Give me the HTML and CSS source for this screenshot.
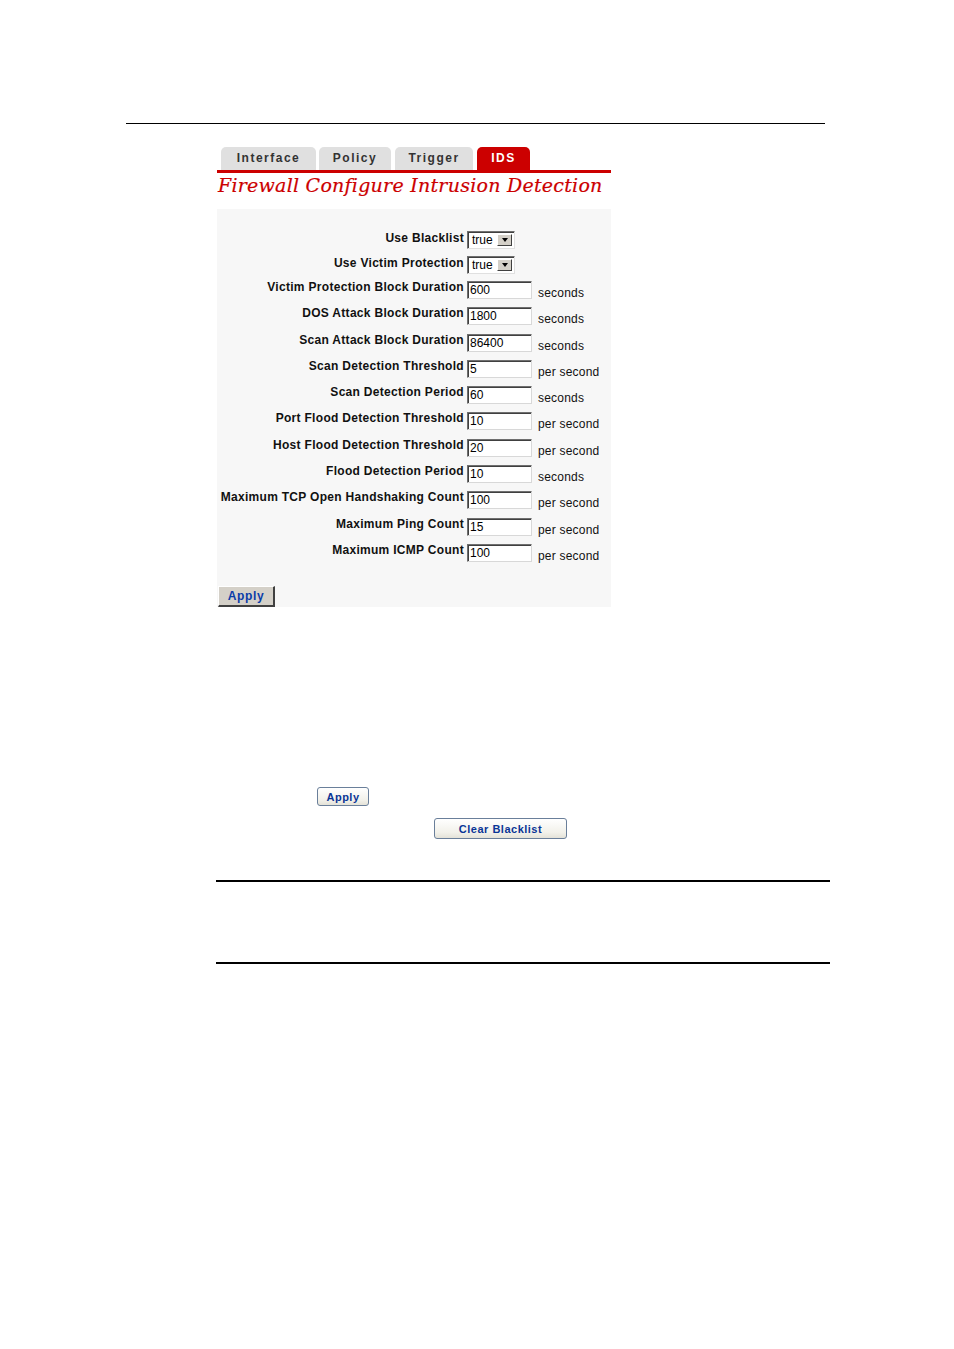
FILE: index.html
```html
<!DOCTYPE html>
<html>
<head>
<meta charset="utf-8">
<link rel="stylesheet" href="styles.css">
</head>
<body>
<div class="rule-top"></div>
<div class="content">
  <div class="tabs">
    <div class="tab t-interface">Interface</div>
    <div class="tab t-policy">Policy</div>
    <div class="tab t-trigger">Trigger</div>
    <div class="tab t-ids active">IDS</div>
  </div>
  <div class="redline"></div>
  <div class="title">Firewall Configure Intrusion Detection</div>
  <div class="panel">
    <div class="row sel-row">
      <div class="label">Use Blacklist</div>
      <div class="select"><span class="sel-val">true</span><span class="sel-btn"><span class="tri"></span></span></div>
      <div class="unit"></div>
    </div>
    <div class="row sel-row">
      <div class="label">Use Victim Protection</div>
      <div class="select"><span class="sel-val">true</span><span class="sel-btn"><span class="tri"></span></span></div>
      <div class="unit"></div>
    </div>
    <div class="row"><div class="label">Victim Protection Block Duration</div><div class="input">600</div><div class="unit">seconds</div></div>
    <div class="row"><div class="label">DOS Attack Block Duration</div><div class="input">1800</div><div class="unit">seconds</div></div>
    <div class="row"><div class="label">Scan Attack Block Duration</div><div class="input">86400</div><div class="unit">seconds</div></div>
    <div class="row"><div class="label">Scan Detection Threshold</div><div class="input">5</div><div class="unit">per second</div></div>
    <div class="row"><div class="label">Scan Detection Period</div><div class="input">60</div><div class="unit">seconds</div></div>
    <div class="row"><div class="label">Port Flood Detection Threshold</div><div class="input">10</div><div class="unit">per second</div></div>
    <div class="row"><div class="label">Host Flood Detection Threshold</div><div class="input">20</div><div class="unit">per second</div></div>
    <div class="row"><div class="label">Flood Detection Period</div><div class="input">10</div><div class="unit">seconds</div></div>
    <div class="row"><div class="label">Maximum TCP Open Handshaking Count</div><div class="input">100</div><div class="unit">per second</div></div>
    <div class="row"><div class="label">Maximum Ping Count</div><div class="input">15</div><div class="unit">per second</div></div>
    <div class="row"><div class="label">Maximum ICMP Count</div><div class="input">100</div><div class="unit">per second</div></div>
    <div class="apply-wrap"><div class="btn-apply">Apply</div></div>
  </div>
  <div class="xp-btn xp-apply">Apply</div>
  <div class="xp-btn xp-clear">Clear Blacklist</div>
</div>
<div class="rule-bottom first"></div>
<div class="rule-bottom second"></div>
</body>
</html>
```

FILE: styles.css
```css
html, body {
  margin: 0;
  padding: 0;
  background: #fff;
}
body {
  font-family: "Liberation Sans", Arial, sans-serif;
  color: #000;
}
.rule-top {
  margin: 123px 0 0 126px;
  width: 699px;
  height: 1px;
  background: #000;
}
.content {
  margin-left: 217px;
  width: 394px;
  margin-top: 23px;
}
.tabs {
  display: flex;
  padding-left: 4px;
  height: 23px;
}
.tab {
  height: 23px;
  box-sizing: border-box;
  border-radius: 5px 5px 0 0;
  background: #e0e0e0;
  color: #333;
  font-weight: bold;
  font-size: 12px;
  letter-spacing: 1.5px;
  display: flex;
  align-items: center;
  justify-content: center;
  padding-bottom: 1px;
}
.t-interface { width: 95px; margin-right: 3px; }
.t-policy { width: 72px; margin-right: 4px; }
.t-trigger { width: 78px; margin-right: 4px; }
.t-ids { width: 53px; }
.tab.active {
  background: #cc0000;
  color: #fff;
}
.redline {
  height: 3px;
  background: #cc0000;
}
.title {
  font-family: "DejaVu Serif", Georgia, serif;
  font-style: italic;
  font-size: 19px;
  line-height: 24px;
  letter-spacing: 0.25px;
  color: #cc0000;
  margin-left: 1px;
  white-space: nowrap;
  -webkit-text-stroke: 0.2px #cc0000;
}
.panel {
  margin-top: 12px;
  background: #f7f7f7;
  padding-top: 22px;
  height: 398px;
  box-sizing: border-box;
}
.row {
  display: grid;
  grid-template-columns: 247px 65px auto;
  column-gap: 3px;
  align-items: start;
  height: 26.3px;
}
.sel-row {
  height: 24.5px;
}
.label {
  text-align: right;
  font-weight: bold;
  font-size: 12px;
  line-height: 14px;
  letter-spacing: 0.3px;
  color: #111;
  white-space: nowrap;
}
.input {
  box-sizing: border-box;
  width: 65px;
  height: 18px;
  margin-top: 1px;
  background: #fff;
  border-top: 1px solid #6f6f6f;
  border-left: 1px solid #6f6f6f;
  border-right: 1px solid #d8d8d8;
  border-bottom: 1px solid #d8d8d8;
  box-shadow: inset 1px 1px 0 #404040;
  font-size: 12px;
  line-height: 17px;
  padding-left: 2px;
  color: #000;
}
.unit {
  font-size: 12px;
  line-height: 14px;
  letter-spacing: 0.2px;
  color: #111;
  padding-top: 6px;
  margin-left: 3px;
  white-space: nowrap;
}
.select {
  box-sizing: border-box;
  width: 48px;
  height: 18px;
  background: #fff;
  border-top: 1px solid #6f6f6f;
  border-left: 1px solid #6f6f6f;
  border-right: 1px solid #e0e0e0;
  border-bottom: 1px solid #e0e0e0;
  box-shadow: inset 1px 1px 0 #404040;
  display: flex;
  align-items: stretch;
}
.sel-val {
  flex: 1;
  font-size: 12px;
  line-height: 17px;
  padding-left: 4px;
}
.sel-btn {
  width: 15px;
  margin: 2px 2px 2px 0;
  background: #d4d0c8;
  border-top: 1px solid #fff;
  border-left: 1px solid #fff;
  border-right: 1px solid #404040;
  border-bottom: 1px solid #404040;
  box-sizing: border-box;
  display: flex;
  align-items: center;
  justify-content: center;
}
.tri {
  width: 0;
  height: 0;
  border-left: 3.5px solid transparent;
  border-right: 3.5px solid transparent;
  border-top: 4px solid #000;
}
.apply-wrap {
  margin-top: 16.5px;
  padding-left: 1px;
}
.btn-apply {
  box-sizing: border-box;
  width: 57px;
  height: 21px;
  background: #d4d0c8;
  border-top: 1px solid #fff;
  border-left: 1px solid #fff;
  border-right: 2px solid #404040;
  border-bottom: 2px solid #404040;
  color: #0a3ca8;
  font-weight: bold;
  font-size: 12px;
  letter-spacing: 0.6px;
  display: flex;
  align-items: center;
  justify-content: center;
}
.xp-btn {
  box-sizing: border-box;
  border: 1px solid #6a7f9a;
  border-radius: 3px;
  background: linear-gradient(#ffffff, #f2f1ea 70%, #e4e2d8);
  color: #0a3596;
  font-weight: bold;
  font-size: 11px;
  letter-spacing: 0.5px;
  display: flex;
  align-items: center;
  justify-content: center;
}
.xp-apply {
  margin-top: 180px;
  margin-left: 100px;
  width: 52px;
  height: 19px;
}
.xp-clear {
  margin-top: 12px;
  margin-left: 217px;
  width: 133px;
  height: 21px;
}
.rule-bottom {
  margin-left: 216px;
  width: 614px;
  height: 2px;
  background: #000;
}
.rule-bottom.first {
  margin-top: 41px;
}
.rule-bottom.second {
  margin-top: 80px;
}
```
